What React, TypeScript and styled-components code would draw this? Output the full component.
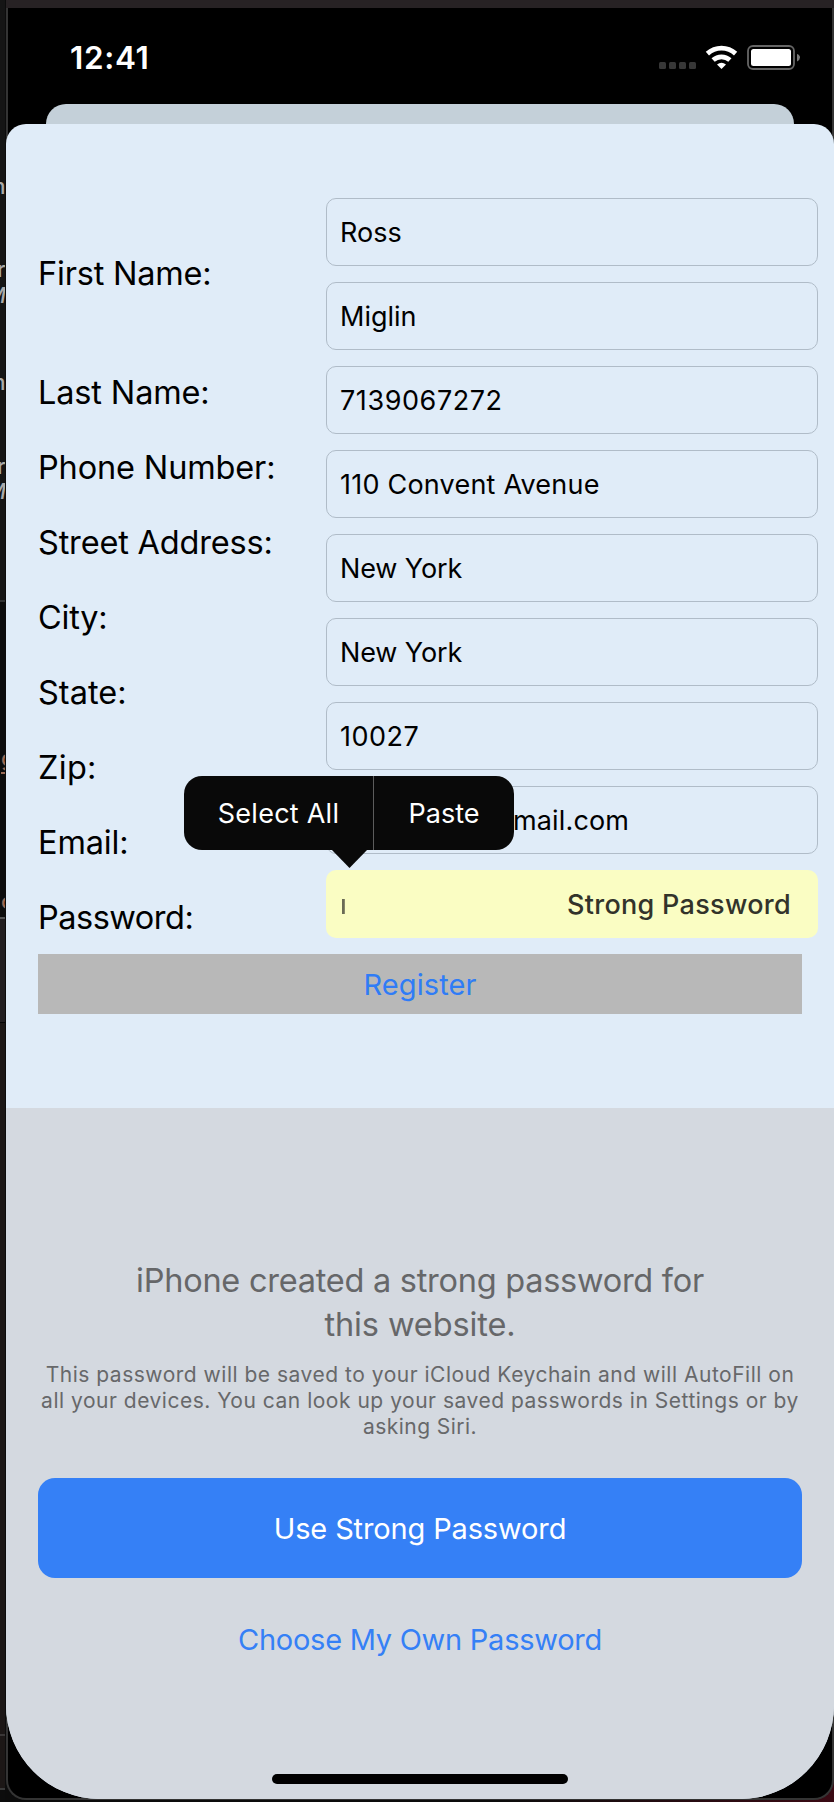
import React from 'react';
import styled, { createGlobalStyle } from 'styled-components';

const GlobalStyle = createGlobalStyle`
  * { box-sizing: border-box; }
  html, body { margin: 0; padding: 0; background: #0b0b0b; }
  body { font-family: Inter, "Liberation Sans", sans-serif; }
  button { font-family: inherit; border: 0; padding: 0; margin: 0; }
`;

const Desktop = styled.div`
  display: flex;
  width: 834px;
  height: 1802px;
  overflow: hidden;
  background: linear-gradient(90deg, #0c0c0c 60%, #3a0a14 100%);
`;

const Editor = styled.div`
  flex: 0 0 5px;
  height: 1802px;
  overflow: hidden;
  background: linear-gradient(#151515 0 600px, #333 600px 602px, #0d0d0d 602px 917px, #555 917px 919px, #221e20 919px 1022px, #050505 1022px 1023px, #1c1716 1023px 1734px, #3a3737 1734px 1736px, #1c1716 1736px 1788px, #3a3a3a 1788px 1790px, #0d0d0d 1790px);
`;

const CodeLine = styled.div<{ $gap: number; $shift?: number; $tone?: string; $slant?: boolean; $underline?: boolean }>`
  width: 30px;
  height: ${p => (p.$underline ? 26 : 20)}px;
  margin-top: ${p => p.$gap}px;
  margin-left: ${p => p.$shift ?? 0}px;
  font-size: 22px;
  font-weight: 500;
  line-height: 20px;
  font-style: ${p => (p.$slant ? 'italic' : 'normal')};
  color: ${p => p.$tone ?? '#aaa'};
  border-bottom: ${p => (p.$underline ? '2px solid #9a6a55' : '0')};
`;

const Phone = styled.div`
  flex: 0 0 829px;
  height: 1802px;
  display: flex;
  flex-direction: column;
`;

const TitleEdge = styled.div`
  height: 8px;
  margin-left: 1px;
  background: #272224;
`;

const Bezel = styled.div`
  height: 1792px;
  background: #000;
  border: 2px solid #343434;
  border-top: 0;
  border-radius: 0 0 20px 20px;
  margin-left: 1px;
`;

const StatusBar = styled.header`
  display: flex;
  height: 96px;
  padding: 0 31px 0 62px;
  justify-content: space-between;
`;

const Clock = styled.div`
  color: #fff;
  font-size: 31.5px;
  font-weight: 600;
  line-height: 38px;
  letter-spacing: 0.65px;
  margin-top: 31px;
`;

const BackSheet = styled.div`
  height: 20px;
  margin: 0 38px;
  border-radius: 20px 20px 0 0;
  background: #c4d0d9;
`;

const Sheet = styled.main`
  height: 1675px;
  margin: 0 -2px;
  display: flex;
  flex-direction: column;
  overflow: hidden;
  border-radius: 20px 20px 94px 94px;
  background: #e0ecf8;
`;

const Form = styled.form`
  flex: 0 0 984px;
  padding: 74px 0 0 32px;
`;

const Columns = styled.div`
  display: flex;
  position: relative;
  height: 756px;
`;

const Labels = styled.div`
  width: 288px;
  display: flex;
  flex-direction: column;
`;

const Label = styled.label<{ $first?: boolean; $track: number }>`
  flex: 0 0 75px;
  height: 75px;
  margin: ${p => (p.$first ? '38px 0 44px' : '0')};
  font-size: 32.5px;
  line-height: 75px;
  letter-spacing: ${p => p.$track}px;
  white-space: nowrap;
  color: #000;
`;

const Fields = styled.div`
  width: 492px;
  display: flex;
  flex-direction: column;
  gap: 16px;
`;

const Field = styled.div<{ $inset?: number; $track: number }>`
  height: 68px;
  padding-left: ${p => p.$inset ?? 13}px;
  border: 1px solid #b0bcc8;
  border-radius: 10px;
  font-size: 27px;
  line-height: 67px;
  letter-spacing: ${p => p.$track}px;
  white-space: nowrap;
  color: #000;
`;

const PasswordField = styled.div`
  height: 68px;
  display: flex;
  justify-content: space-between;
  align-items: center;
  padding: 0 27px 0 16px;
  border-radius: 10px;
  background: #fafdc3;
`;

const ClippedLetter = styled.span`
  width: 3px;
  height: 15px;
  margin-top: 5px;
  background: linear-gradient(90deg, #6a6b55 70%, #a9ab88);
`;

const StrongHint = styled.span`
  color: #32332a;
  font-size: 27px;
  font-weight: 500;
  letter-spacing: 0.3px;
  line-height: 66px;
  padding-top: 2px;
`;

const EditMenu = styled.div`
  position: absolute;
  left: 146px;
  top: 578px;
  width: 330px;
  height: 74px;
  display: flex;
  border-radius: 18px;
  background: #090909;
`;

const MenuItem = styled.button<{ $width: number; $divided?: boolean; $track: number }>`
  width: ${p => p.$width}px;
  height: 74px;
  background: transparent;
  border-right: ${p => (p.$divided ? '1px solid #5c5c5c' : '0')};
  color: #fff;
  font-size: 27px;
  letter-spacing: ${p => p.$track}px;
`;

const MenuArrow = styled.svg`
  position: absolute;
  left: 147px;
  top: 73px;
  width: 37px;
  height: 19px;
`;

const Register = styled.button`
  display: block;
  width: 764px;
  height: 60px;
  background: #b8b8b8;
  color: #2f7cf6;
  font-size: 29px;
  letter-spacing: 0.1px;
`;

const Prompt = styled.section`
  flex: 1;
  display: flex;
  flex-direction: column;
  align-items: center;
  padding: 151px 0 15px;
  background: #d4d9e0;
  white-space: nowrap;
`;

const PromptTitle = styled.h1<{ $track: number }>`
  margin: 0;
  height: 44px;
  font-size: 32.5px;
  font-weight: 400;
  line-height: 44px;
  letter-spacing: ${p => p.$track}px;
  color: #666769;
`;

const PromptCopy = styled.div`
  margin-top: 15px;
`;

const CopyLine = styled.p<{ $track: number }>`
  margin: 0;
  text-align: center;
  font-size: 21px;
  line-height: 26px;
  letter-spacing: ${p => p.$track}px;
  color: #67686a;
`;

const Primary = styled.button`
  flex: none;
  width: 764px;
  height: 100px;
  margin-top: 38px;
  border-radius: 17px;
  background: #3580f6;
  color: #fff;
  font-size: 29px;
  letter-spacing: -0.14px;
`;

const Secondary = styled.button`
  flex: none;
  height: 44px;
  margin-top: 39px;
  background: transparent;
  color: #3580f6;
  font-size: 29px;
  letter-spacing: -0.26px;
`;

const HomeIndicator = styled.div`
  width: 296px;
  height: 10px;
  margin-top: auto;
  border-radius: 5px;
  background: #000;
`;

const StatusGlyphs = styled.svg`
  margin-top: 36px;
`;

const StatusIcons = () => (
  <StatusGlyphs width="142" height="26" viewBox="659 44 142 26">
    <g fill="#373737">
      {[659, 669, 679, 689].map(x => <rect key={x} x={x} y="62" width="7" height="7" rx="1.5" />)}
    </g>
    <g fill="none" stroke="#fff" strokeWidth="4.8">
      <path d="M707.4 53.6A21 21 0 0 1 735.6 53.6" />
      <path d="M713.1 60A12.6 12.6 0 0 1 729.9 60" />
    </g>
    <path d="M721.5 69L717 64.6Q721.5 60.8 726 64.6Z" fill="#fff" />
    <rect x="748" y="46" width="46" height="23" rx="5" fill="none" stroke="#666" strokeWidth="1.8" />
    <rect x="751" y="49" width="40" height="17" rx="2.5" fill="#fff" />
    <path d="M797 54Q800 55 800 57.5Q800 60 797 61.5Z" fill="#777" />
  </StatusGlyphs>
);

const labels: [string, number][] = [
  ['First Name:', -0.2], ['Last Name:', -0.15], ['Phone Number:', -0.15], ['Street Address:', -0.18],
  ['City:', -0.2], ['State:', 0], ['Zip:', 0.3], ['Email:', -0.15], ['Password:', -0.5],
];

const values: [string, number, number?][] = [
  ['Ross', 0], ['Miglin', 0], ['7139067272', 0.57], ['110 Convent Avenue', 0.22],
  ['New York', -0.12], ['New York', -0.12], ['10027', 0.5], ['mail.com', 0.15, 186],
];

export default function App() {
  return (
    <>
      <GlobalStyle />
      <Desktop>
        <Editor>
          <CodeLine $gap={176} $shift={-14}>m</CodeLine>
          <CodeLine $gap={63} $shift={-3}>r</CodeLine>
          <CodeLine $gap={6} $shift={-14} $slant>M</CodeLine>
          <CodeLine $gap={67} $shift={-14}>m</CodeLine>
          <CodeLine $gap={64} $shift={-3}>r</CodeLine>
          <CodeLine $gap={5} $shift={-14} $slant>M</CodeLine>
          <CodeLine $gap={247} $shift={1} $tone="#9a6a55" $underline>g</CodeLine>
          <CodeLine $gap={117} $shift={1} $tone="#9a6a55">c</CodeLine>
        </Editor>
        <Phone>
          <TitleEdge />
          <Bezel>
            <StatusBar>
              <Clock>12:41</Clock>
              <StatusIcons />
            </StatusBar>
            <BackSheet />
            <Sheet>
              <Form>
                <Columns>
                  <Labels>
                    {labels.map(([text, track], i) => (
                      <Label key={text} $first={i === 0} $track={track}>{text}</Label>
                    ))}
                  </Labels>
                  <Fields>
                    {values.map(([text, track, inset], i) => (
                      <Field key={i} $track={track} $inset={inset}>{text}</Field>
                    ))}
                    <PasswordField>
                      <ClippedLetter />
                      <StrongHint>Strong Password</StrongHint>
                    </PasswordField>
                  </Fields>
                  <EditMenu>
                    <MenuItem type="button" $width={190} $divided $track={0.25}>Select All</MenuItem>
                    <MenuItem type="button" $width={140} $track={0.05}>Paste</MenuItem>
                    <MenuArrow viewBox="0 0 37 19"><path d="M0 0H37L18.5 19Z" fill="#090909" /></MenuArrow>
                  </EditMenu>
                </Columns>
                <Register type="button">Register</Register>
              </Form>
              <Prompt>
                <PromptTitle $track={-0.26}>iPhone created a strong password for</PromptTitle>
                <PromptTitle $track={-0.1}>this website.</PromptTitle>
                <PromptCopy>
                  <CopyLine $track={0.51}>This password will be saved to your iCloud Keychain and will AutoFill on</CopyLine>
                  <CopyLine $track={0.51}>all your devices. You can look up your saved passwords in Settings or by</CopyLine>
                  <CopyLine $track={0.45}>asking Siri.</CopyLine>
                </PromptCopy>
                <Primary>Use Strong Password</Primary>
                <Secondary>Choose My Own Password</Secondary>
                <HomeIndicator />
              </Prompt>
            </Sheet>
          </Bezel>
        </Phone>
      </Desktop>
    </>
  );
}
